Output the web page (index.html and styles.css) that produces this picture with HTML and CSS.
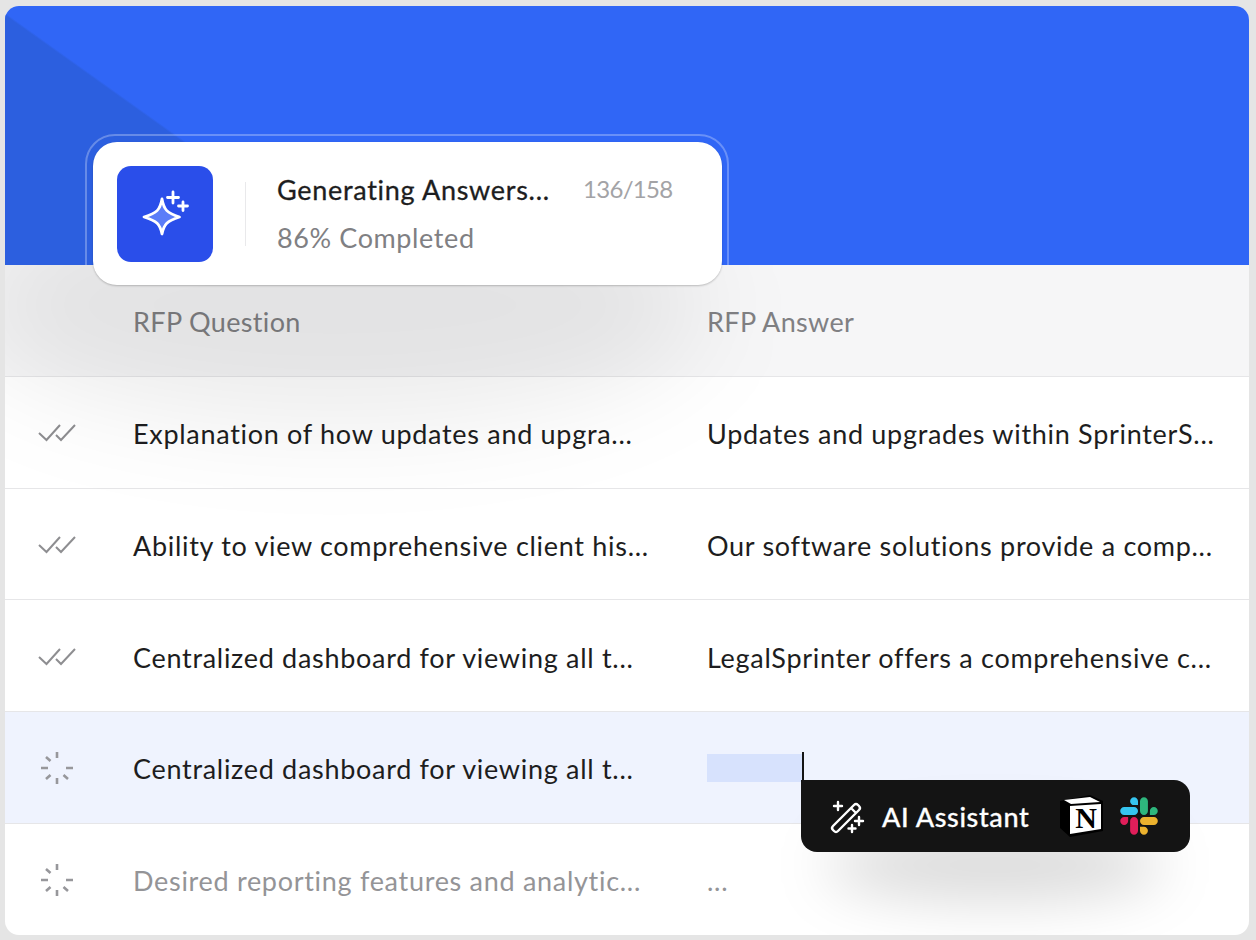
FILE: index.html
```html
<!DOCTYPE html>
<html lang="en">
<head>
  <meta charset="UTF-8">
  <title>RFP Answers</title>
  <link rel="stylesheet" href="styles.css">
</head>
<body>
  <div class="card">
    <div class="hero"></div>

    <!-- progress popup -->
    <div class="popup-ring"></div>
    <div class="popup">
      <div class="popup-icon">
        <svg width="96" height="96" viewBox="0 0 96 96">
          <path d="M45 33 C47 44 50 47 62.500 51 C50 55 47 58 45 68 C43 58 40 55 27 51 C40 47 43 44 45 33 Z" fill="#5b7df8" stroke="#fff" stroke-width="2.800" stroke-linejoin="round"/>
          <path d="M56 26 V37 M50.500 31.500 H61.500 M66 36 V44.500 M61.500 40 H70.500" stroke="#fff" stroke-width="2.800" stroke-linecap="round" fill="none"/>
        </svg>
      </div>
      <div class="popup-divider"></div>
      <div class="popup-text">
        <div class="popup-title">Generating Answers...</div>
        <div class="popup-sub">86% Completed</div>
      </div>
      <div class="popup-count">136/158</div>
    </div>

    <div class="table">
      <div class="row row-head">
        <div class="cell-icon"></div>
        <div class="cell-q">RFP Question</div>
        <div class="cell-a">RFP Answer</div>
      </div>

      <div class="row">
        <div class="cell-icon">
          <svg class="check" width="40" height="20" viewBox="0 0 40 20"><path d="M1 10 L8.500 17 L22 2 M18 12 L23 17 L37 2" /></svg>
        </div>
        <div class="cell-q">Explanation of how updates and upgra...</div>
        <div class="cell-a">Updates and upgrades within SprinterS...</div>
      </div>

      <div class="row">
        <div class="cell-icon">
          <svg class="check" width="40" height="20" viewBox="0 0 40 20"><path d="M1 10 L8.500 17 L22 2 M18 12 L23 17 L37 2" /></svg>
        </div>
        <div class="cell-q">Ability to view comprehensive client his...</div>
        <div class="cell-a">Our software solutions provide a comp...</div>
      </div>

      <div class="row">
        <div class="cell-icon">
          <svg class="check" width="40" height="20" viewBox="0 0 40 20"><path d="M1 10 L8.500 17 L22 2 M18 12 L23 17 L37 2" /></svg>
        </div>
        <div class="cell-q">Centralized dashboard for viewing all t...</div>
        <div class="cell-a">LegalSprinter offers a comprehensive c...</div>
      </div>

      <div class="row row-active">
        <div class="cell-icon">
          <svg class="spin" width="36" height="36" viewBox="0 0 36 36"><path d="M18 2 V8 M18 28 V34 M2 18 H9 M27 18 H34 M7 7 L11.500 11 M7 29 L11.500 25 M29 29 L24.500 25" /></svg>
        </div>
        <div class="cell-q">Centralized dashboard for viewing all t...</div>
        <div class="cell-a"><span class="selection"></span><span class="caret"></span></div>
      </div>

      <div class="row row-muted">
        <div class="cell-icon">
          <svg class="spin" width="36" height="36" viewBox="0 0 36 36"><path d="M18 2 V8 M18 28 V34 M2 18 H9 M27 18 H34 M7 7 L11.500 11 M7 29 L11.500 25 M29 29 L24.500 25" /></svg>
        </div>
        <div class="cell-q">Desired reporting features and analytic...</div>
        <div class="cell-a">...</div>
      </div>

      <div class="shade shade-popup"></div>
      <div class="shade shade-toolbar"></div>
    </div>

    <!-- floating toolbar -->
    <div class="toolbar">
      <svg class="wand" width="38" height="38" viewBox="0 0 38 38">
        <path d="M5 29 L26 8 Q28 6 30 8 L31 9 Q33 11 31 13 L10 34 Q8 36 6 34 L5 33 Q3 31 5 29 Z M23 11 L28 16" />
        <path d="M10 5 V13 M6 9 H14 M31 20 V28 M27 24 H35 M24 28 V35 M20.500 31.500 H27.500" />
      </svg>
      <span class="toolbar-label">AI Assistant</span>
      <svg class="notion" width="46" height="46" viewBox="0 0 46 46">
        <path d="M1 8 L31 2 L44 8 V38 L11 44 L1 35 Z" fill="#000"/>
        <path d="M5 7 L31 4 L41 9 L12 11 Z" fill="#fff"/>
        <path d="M11 13 L42 11 V36 L11 41 Z" fill="#fff"/>
        <text x="27" y="35" text-anchor="middle" class="notion-n">N</text>
      </svg>
      <svg class="slack" width="38" height="38" viewBox="0 0 127 127">
        <path d="M27.200 80c0 7.300-5.900 13.200-13.200 13.200C6.700 93.200.8 87.300.8 80c0-7.300 5.900-13.200 13.200-13.200h13.200V80zm6.600 0c0-7.300 5.900-13.200 13.200-13.200 7.300 0 13.200 5.900 13.200 13.200v33c0 7.300-5.900 13.200-13.200 13.200-7.300 0-13.200-5.900-13.200-13.200V80z" fill="#e01e5a"/>
        <path d="M47 27c-7.300 0-13.200-5.900-13.200-13.200C33.800 6.500 39.700.6 47 .6c7.300 0 13.200 5.900 13.200 13.200V27H47zm0 6.700c7.300 0 13.200 5.900 13.200 13.200 0 7.300-5.900 13.200-13.200 13.200H13.900C6.600 60.100.7 54.200.7 46.900c0-7.300 5.900-13.200 13.200-13.200H47z" fill="#36c5f0"/>
        <path d="M99.900 46.900c0-7.300 5.900-13.200 13.200-13.200 7.300 0 13.200 5.900 13.200 13.200 0 7.300-5.900 13.200-13.200 13.200H99.900V46.900zm-6.600 0c0 7.300-5.900 13.200-13.200 13.200-7.300 0-13.200-5.900-13.200-13.200V13.800C66.900 6.500 72.800.6 80.100.6c7.300 0 13.200 5.900 13.200 13.200v33.100z" fill="#2eb67d"/>
        <path d="M80.100 99.800c7.300 0 13.200 5.900 13.200 13.200 0 7.300-5.900 13.200-13.200 13.200-7.300 0-13.200-5.900-13.200-13.200V99.800h13.200zm0-6.600c-7.300 0-13.200-5.900-13.200-13.200 0-7.300 5.900-13.200 13.200-13.200h33.100c7.300 0 13.200 5.900 13.200 13.200 0 7.300-5.900 13.200-13.200 13.200H80.100z" fill="#ecb22e"/>
      </svg>
    </div>
  </div>
</body>
</html>
```

FILE: styles.css
```css
/* page */
html, body {
  height: 100%;
}

body {
  margin: 0;
  padding: 6px 7px 5px 5px;
  box-sizing: border-box;
  height: 940px;
  overflow: hidden;
  background: #e5e5e5;
  font-family: 'Lato', sans-serif;
  font-variant-ligatures: none;
  color: #1d1d20;
}

.card {
  position: relative;
  height: 929px;
  background: #fff;
  border-radius: 14px;
  overflow: hidden;
}

/* blue top part */
.hero {
  height: 259px;
  background:
    linear-gradient(35.5deg, #2c5fdf 0%, #2c5fdf 49.500%, transparent 50%) 0 4px / 350px 255px no-repeat,
    #3066f6;
}

/* progress popup */
.popup-ring {
  position: absolute;
  left: 80px;
  top: 128px;
  width: 644px;
  height: 160px;
  box-sizing: border-box;
  border: 2px solid rgba(255, 255, 255, 0.28);
  border-radius: 30px;
  clip-path: inset(0 0 29px 0);
}

.popup {
  position: absolute;
  left: 88px;
  top: 136px;
  width: 629px;
  height: 143px;
  box-sizing: border-box;
  padding: 24px 24px 0;
  display: flex;
  align-items: flex-start;
  background: #fff;
  border-radius: 24px;
  box-shadow: 0 1px 2px rgba(0, 0, 0, 0.22);
  z-index: 3;
}

.popup-icon {
  width: 96px;
  height: 96px;
  flex: none;
  background: #2a4eea;
  border-radius: 14px;
}

.popup-divider {
  width: 1px;
  height: 64px;
  flex: none;
  margin: 16px 31px 0 32px;
  background: #e9e9eb;
}

.popup-text {
  width: 306px;
  flex: none;
}

.popup-title {
  font-size: 27px;
  line-height: 34px;
  margin-top: 7px;
  letter-spacing: 0.7px;
  -webkit-text-stroke: 0.3px #1d1d20;
  color: #1d1d20;
}

.popup-sub {
  font-size: 27px;
  line-height: 34px;
  margin-top: 14px;
  letter-spacing: 0.6px;
  color: #808083;
}

.popup-count {
  font-size: 24px;
  line-height: 34px;
  margin-top: 6px;
  letter-spacing: -0.7px;
  color: #a3a3a6;
}

/* table */
.table {
  position: relative;
  overflow: hidden;
}

.row {
  height: 111.750px;
  box-sizing: border-box;
  display: flex;
  align-items: center;
  border-bottom: 1px solid #e6e6e8;
  font-size: 27px;
  letter-spacing: 0.7px;
  white-space: nowrap;
}

.row:last-of-type {
  border-bottom: none;
}

.row-head {
  background: #f6f6f7;
  color: #808083;
  letter-spacing: 0.35px;
}

.row-active {
  background: #eff3fe;
}

.row-muted {
  color: #949497;
}

.cell-icon {
  width: 128px;
  flex: none;
  display: flex;
  padding-left: 33px;
  padding-top: 2px;
  box-sizing: border-box;
}

.cell-q {
  width: 574px;
  flex: none;
  padding-top: 3px;
}

.cell-a {
  display: flex;
  align-items: flex-start;
  padding-top: 3px;
}

.row-active .cell-icon, .row-muted .cell-icon {
  padding-left: 34px;
}

.check path, .spin path {
  fill: none;
  stroke: #8e8e91;
  stroke-width: 2;
}

.spin path {
  stroke-width: 2.600;
  stroke: #97979b;
}

.selection {
  width: 95px;
  height: 28px;
  margin-top: -1px;
  background: #d7e2fd;
}

.caret {
  width: 2px;
  height: 30px;
  margin-top: -3px;
  background: #141414;
}

/* soft shadows, these lie on top of the rows */
.shade {
  position: absolute;
  border-radius: 50%;
  pointer-events: none;
}

.shade-popup {
  left: -40px;
  top: -80px;
  width: 740px;
  height: 240px;
  background: rgba(0, 0, 0, 0.075);
  filter: blur(50px);
}

.shade-toolbar {
  left: 820px;
  top: 565px;
  width: 340px;
  height: 70px;
  background: rgba(0, 0, 0, 0.15);
  filter: blur(28px);
}

/* floating toolbar */
.toolbar {
  position: absolute;
  left: 796px;
  top: 774px;
  width: 389px;
  height: 72px;
  box-sizing: border-box;
  padding-left: 27px;
  display: flex;
  align-items: center;
  background: #141414;
  border-radius: 0 16px 16px 16px;
  color: #fff;
  z-index: 3;
}

.wand {
  flex: none;
}

.wand path {
  fill: none;
  stroke: #fff;
  stroke-width: 2.400;
  stroke-linecap: round;
}

.toolbar-label {
  margin-left: 16px;
  width: 177px;
  flex: none;
  font-size: 27px;
  font-weight: 500;
  letter-spacing: 0.6px;
  -webkit-text-stroke: 0.3px #fff;
}

.notion {
  flex: none;
}

.notion-n {
  font-family: 'Liberation Serif', serif;
  font-size: 30px;
  font-weight: 700;
  fill: #000;
}

.slack {
  flex: none;
  margin-left: 14.500px;
}
```
